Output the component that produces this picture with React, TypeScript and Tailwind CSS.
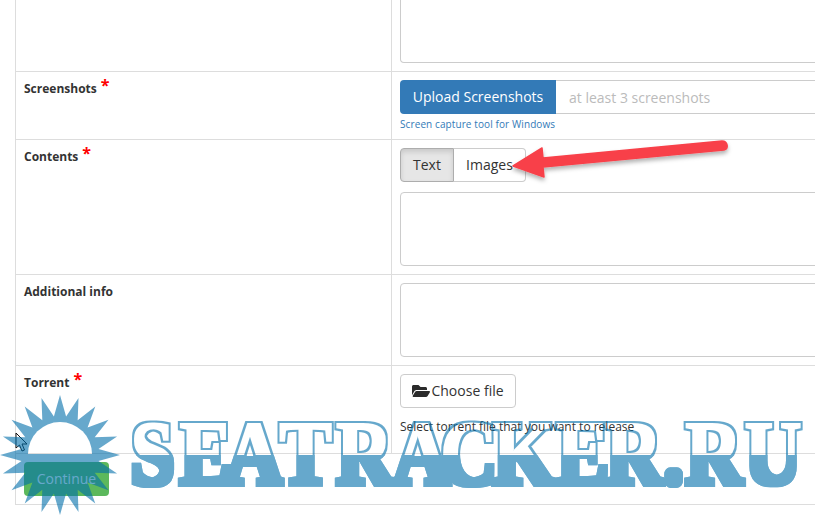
import { FaFolderOpen } from "react-icons/fa";

function Row({ label, required, divider = true, className, children }: { label: string; required?: boolean; divider?: boolean; className: string; children?: React.ReactNode }) {
  return (
    <div className={`flex border-b border-[#ddd] ${className}`}>
      <div className={`w-[376px] shrink-0 pl-2 pt-2 text-[12px] font-bold leading-[17px] text-[#333] ${divider ? "border-r border-[#ddd]" : ""}`}>
        {label}
        {required && <span className="ml-1 text-[16px] leading-[0] text-[#f00] align-[2px]">*</span>}
      </div>
      <div className="flex-1 pl-2 pr-2">{children}</div>
    </div>
  );
}

function Sun() {
  // 20 spikes, every 18 degrees
  const pts: string[] = [];
  for (let i = 0; i < 40; i++) {
    const a = (i * 9 * Math.PI) / 180;
    const r = i % 2 === 0 ? 60 : 39;
    pts.push(`${(60 + r * Math.cos(a)).toFixed(1)},${(60 + r * Math.sin(a)).toFixed(1)}`);
  }
  return (
    <svg width="120" height="120" viewBox="0 0 120 120">
      <defs>
        <mask id="sunCut">
          <rect width="120" height="120" fill="white" />
          <path d="M28 59a32 32 0 0 1 64 0z" fill="black" />
        </mask>
      </defs>
      <polygon points={pts.join(" ")} fill="#006eaa" fillOpacity="0.6" mask="url(#sunCut)" />
    </svg>
  );
}

export default function App() {
  return (
    <div className="relative h-[515px] w-[815px] overflow-hidden bg-white font-['Open_Sans',sans-serif] text-[#333]">
      <div className="ml-[15px] w-[900px] border-x border-[#ddd]">
        <Row label="" className="h-[72px]">
          <div className="h-[63px] rounded-b border border-t-0 border-[#ccc]" />
        </Row>
        <Row label="Screenshots" required className="h-[68px]">
          <div className="mt-2 flex h-[34px]">
            <div className="flex w-[156px] items-center justify-center rounded-l bg-[#337ab7] pb-[2px] text-[14px] text-white">Upload Screenshots</div>
            <div className="flex flex-1 items-center border border-l-0 border-[#ccc] pl-[13px] text-[14px] text-[#bbb]">at least 3 screenshots</div>
          </div>
          <div className="mt-[3px] text-[10px] leading-[14px] tracking-[0.1px] text-[#337ab7]">Screen capture tool for Windows</div>
        </Row>
        <Row label="Contents" required className="h-[135px]">
          <div className="mt-2 flex h-[34px] w-[126px] text-[14px]">
            <div className="flex w-[54px] items-center justify-center rounded-l border border-[#adadad] bg-[#e6e6e6] pb-[2px] shadow-[inset_0_3px_5px_rgba(0,0,0,0.125)]">Text</div>
            <div className="flex flex-1 items-center justify-center rounded-r border border-l-0 border-[#ccc] pb-[2px]">Images</div>
          </div>
          <div className="mt-[10px] h-[74px] rounded border border-[#ccc]" />
        </Row>
        <Row label="Additional info" className="h-[91px]">
          <div className="mt-2 h-[74px] rounded border border-[#ccc]" />
        </Row>
        <Row label="Torrent" required className="h-[88px]">
          <div className="mt-2 flex h-[34px] w-[116px] items-center justify-center rounded border border-[#ccc] pb-[2px] text-[14px]">
            <FaFolderOpen className="mr-px mt-[2px] h-[16px] w-[18px] text-[#2b2b2b]" />
            Choose file
          </div>
          <div className="mt-[10px] text-[12px] leading-[17px]">Select torrent file that you want to release</div>
        </Row>
        <Row label="" divider={false} className="h-[51px]" />
      </div>

      <div className="absolute left-[24px] top-[462px] flex h-[34px] w-[85px] items-center justify-center rounded bg-[#5cb85c] pb-[2px] text-[14px] text-white">Continue</div>

      <svg className="absolute left-[500px] top-[130px]" width="240" height="60" viewBox="0 0 240 60">
        <defs>
          <filter id="arrowShadow" x="-10%" y="-30%" width="120%" height="170%">
            <feDropShadow dx="0" dy="3" stdDeviation="2" floodColor="#000" floodOpacity="0.3" />
          </filter>
        </defs>
        <path
          d="M13 36 42 18 43 28 222 11C228 11 229 19 224 20L43 37 44 47Z"
          fill="#f8414a"
          stroke="#f8414a"
          strokeWidth="1.5"
          strokeLinejoin="round"
          filter="url(#arrowShadow)"
        />
      </svg>

      <svg className="absolute left-[15px] top-[432px]" width="14" height="20" viewBox="0 0 14 20">
        <path d="M1 1V16L4.5 13 7 19 9.5 18 7 12H12Z" fill="#fff" stroke="#111" strokeWidth="1" />
      </svg>

      <div className="absolute left-0 top-[395px]">
        <Sun />
      </div>

      <svg className="absolute left-[128px] top-[410px]" width="680" height="90" viewBox="0 0 680 90">
        <defs>
          {/* fattens the serif and splits it: outline above the water line, solid below */}
          <filter id="markFat" filterUnits="userSpaceOnUse" primitiveUnits="userSpaceOnUse" x="0" y="0" width="680" height="90">
            <feMorphology in="SourceAlpha" operator="dilate" radius="3" result="outer" />
            <feMorphology in="SourceAlpha" operator="dilate" radius="1.2" result="inner" />
            <feComposite in="outer" in2="inner" operator="out" result="ring" />
            <feFlood floodColor="#000" x="0" y="45" width="680" height="45" result="band" />
            <feComposite in="band" in2="outer" operator="in" result="lower" />
            <feMerge result="shape">
              <feMergeNode in="ring" />
              <feMergeNode in="lower" />
            </feMerge>
            <feFlood floodColor="#006eaa" floodOpacity="0.6" x="0" y="0" width="680" height="90" result="tint" />
            <feComposite in="tint" in2="shape" operator="in" />
          </filter>
        </defs>
        <g filter="url(#markFat)">
          <text
            transform="scale(0.86 1)"
            x="3 60 113 176 242 308 363 424 498 555 623 648 717"
            y="74"
            fontFamily="'Liberation Serif', serif"
            fontWeight="700"
            fontSize="92"
            fill="#000"
          >
            SEATRACKER.RU
          </text>
        </g>
      </svg>
    </div>
  );
}
